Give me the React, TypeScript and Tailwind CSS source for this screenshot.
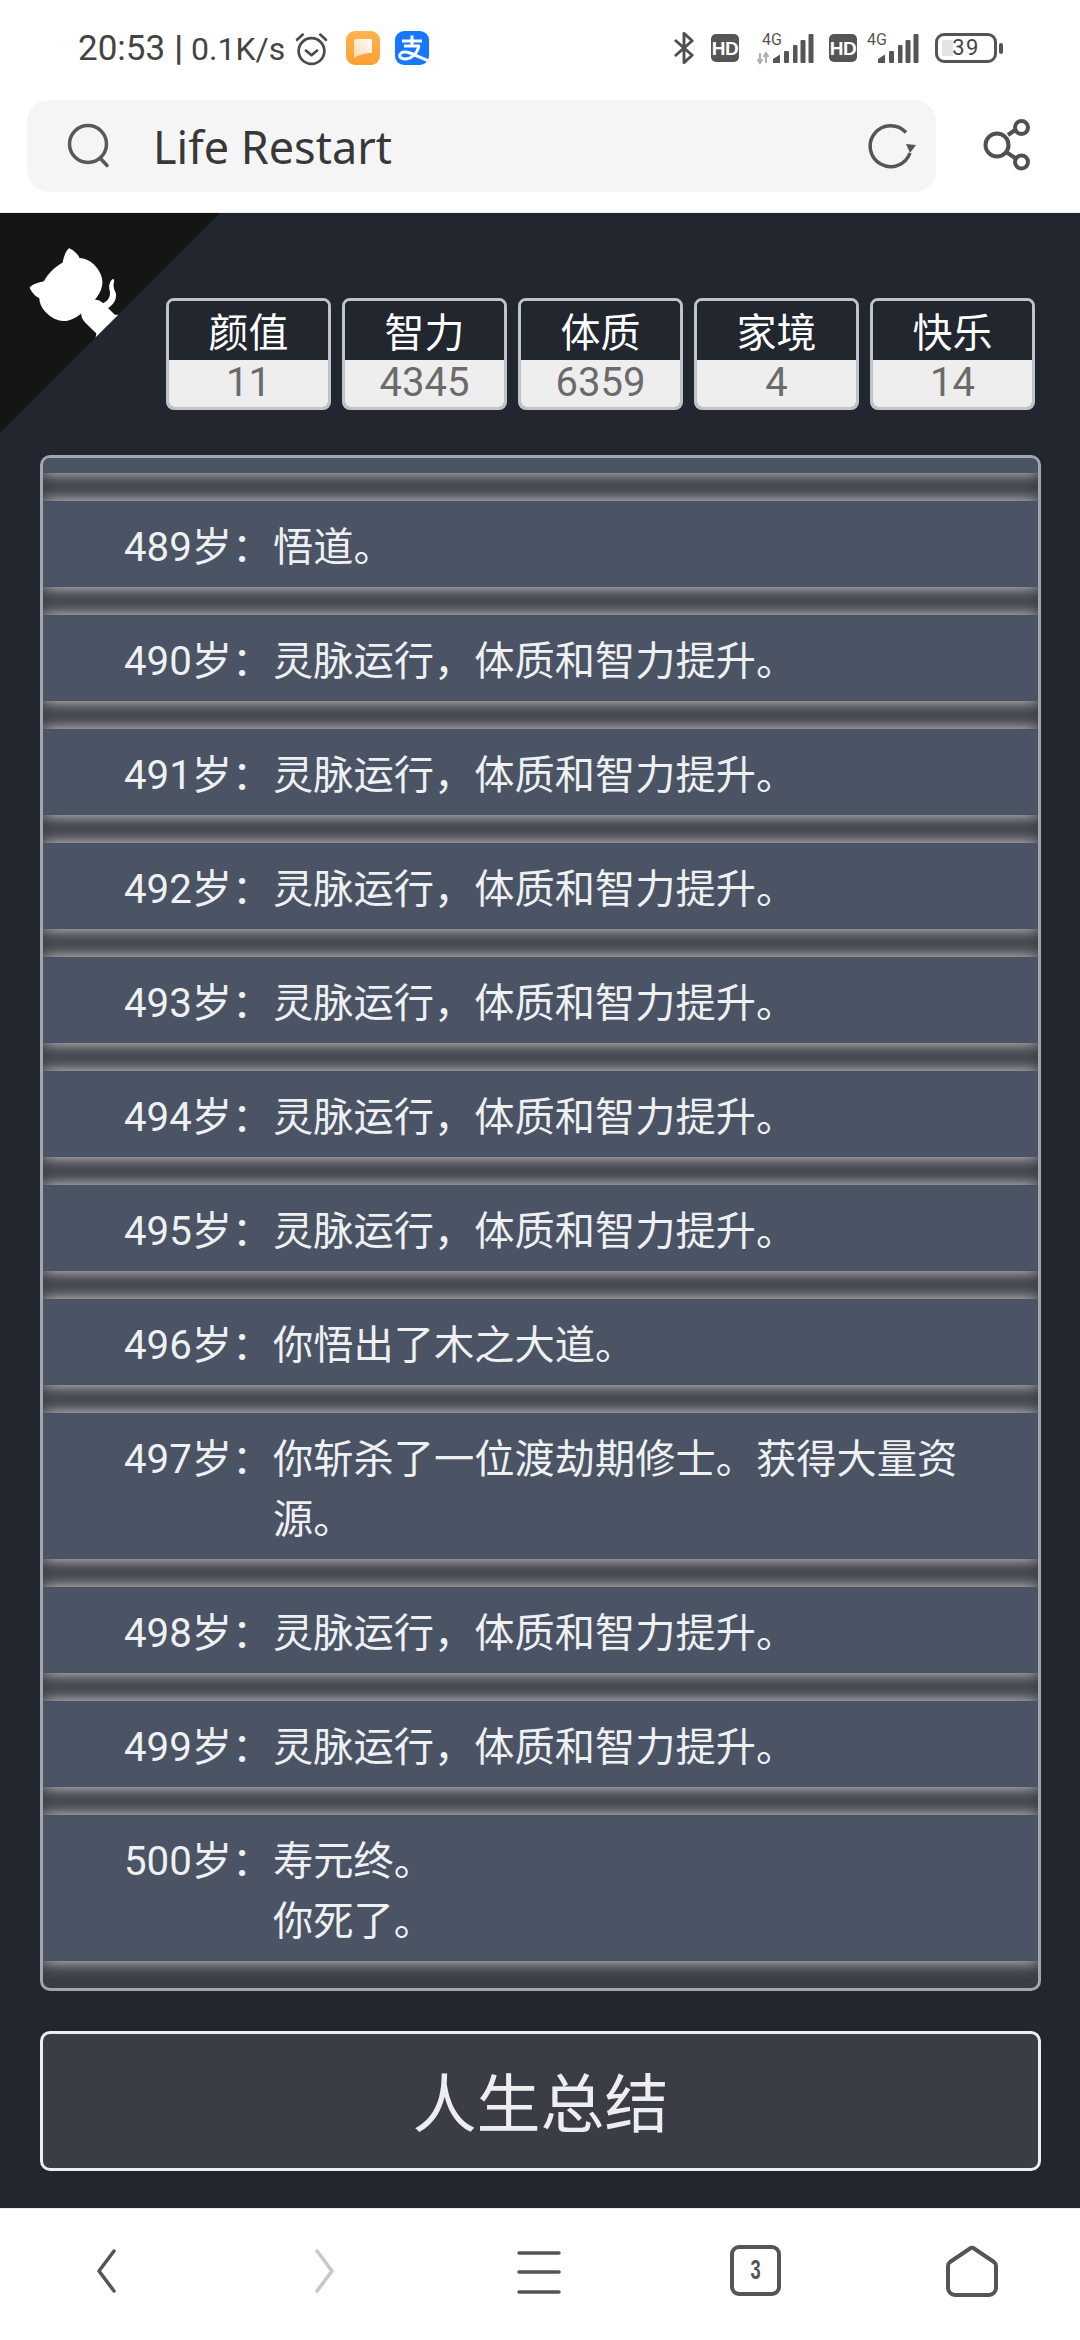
import React from "react";

const SANS = "font-['Roboto','Noto_Sans_CJK_SC',sans-serif]";

const stats = [
  ["颜值", "11"],
  ["智力", "4345"],
  ["体质", "6359"],
  ["家境", "4"],
  ["快乐", "14"],
];

const UP = "灵脉运行，体质和智力提升。";
const rows: [string, string[]][] = [
  ["489岁：", ["悟道。"]],
  ["490岁：", [UP]],
  ["491岁：", [UP]],
  ["492岁：", [UP]],
  ["493岁：", [UP]],
  ["494岁：", [UP]],
  ["495岁：", [UP]],
  ["496岁：", ["你悟出了木之大道。"]],
  ["497岁：", ["你斩杀了一位渡劫期修士。获得大量资源。"]],
  ["498岁：", [UP]],
  ["499岁：", [UP]],
  ["500岁：", ["寿元终。", "你死了。"]],
];

function Alarm() {
  return (
    <svg width="35" height="35" viewBox="0 0 34 34" fill="none" stroke="#4a4a4a" strokeWidth="2.6" strokeLinecap="round" strokeLinejoin="round">
      <circle cx="17" cy="19.5" r="12.5" />
      <path d="M11.5 19l5.5 4.5 5.5-4.5" />
      <path d="M3 8.5 8.5 3.5M31 8.5 25.5 3.5" />
    </svg>
  );
}

function NoteApp() {
  return (
    <svg width="34" height="34" viewBox="0 0 34 34">
      <defs>
        <linearGradient id="og" x1="0" y1="0" x2="0" y2="1">
          <stop offset="0" stopColor="#ffb44e" />
          <stop offset="1" stopColor="#fb9f32" />
        </linearGradient>
        <linearGradient id="wg" x1="1" y1="0" x2="0" y2="1">
          <stop offset="0" stopColor="#ffffff" />
          <stop offset="1" stopColor="#fbd9a8" />
        </linearGradient>
      </defs>
      <rect width="34" height="34" rx="9" fill="url(#og)" />
      <path d="M10 8h14a2 2 0 0 1 2 2v12c-6 0-11 1-18 5V10a2 2 0 0 1 2-2z" fill="url(#wg)" />
    </svg>
  );
}

function Alipay() {
  return (
    <svg width="34" height="34" viewBox="0 0 34 34">
      <rect width="34" height="34" rx="9" fill="#1677ff" />
      <g fill="none" stroke="#fff" strokeWidth="3" strokeLinecap="butt">
        <path d="M7 10h20M17 4.5v10M9 15h16" />
        <path d="M24 15c-2 8-8 13-14 13-4 0-6-2-5-4.500 1-2.500 5-3.500 10-1.500 5 2 10 4.500 19 8" />
      </g>
    </svg>
  );
}

function Bluetooth() {
  return (
    <svg width="20" height="34" viewBox="0 0 22 36" fill="none" stroke="#4f4f4f" strokeWidth="3.2" strokeLinejoin="round" strokeLinecap="round">
      <path d="M2 10l18 16-9 8V2l9 8L2 26" />
    </svg>
  );
}

function HD() {
  return (
    <div className="w-[28px] h-[28px] rounded-[5px] bg-[#555555] flex items-center justify-center text-white font-bold text-[19px] leading-none font-['Liberation_Sans',sans-serif] tracking-[-0.5px]">
      HD
    </div>
  );
}

function Signal({ arrows }: { arrows?: boolean }) {
  return (
    <svg width="57" height="40" viewBox="0 -4 57 40">
      <text x="5" y="13" fontSize="16" fill="#555" fontFamily="Roboto, sans-serif">4G</text>
      {arrows && (
        <g fill="none" stroke="#b0b0b0" strokeWidth="2">
          <path d="M3 21v10M0.500 27l2.500 4 2.500-4" />
          <path d="M9 31V21M6.500 25l2.500-4 2.500 4" />
        </g>
      )}
      <g fill="#555">
        <path d="M16 31v-4l7-4.500v8.500z" />
        <rect x="27" y="19" width="5" height="12" rx="1" />
        <rect x="36" y="13" width="4.500" height="18" rx="1" />
        <rect x="43.500" y="8" width="5" height="23" rx="1" />
        <rect x="51.500" y="2" width="5" height="29" rx="1" />
      </g>
    </svg>
  );
}

function Battery() {
  return (
    <div className="flex items-center gap-[2px]">
      <div className="relative w-[62px] h-[30px] rounded-[9px] border-[3px] border-[#555555] flex items-center justify-center">
        <div className="absolute left-[4px] top-[4px] bottom-[4px] w-[11px] bg-[#e4e4e4]" />
        <span className="relative text-[#444444] text-[22px] leading-none font-['Roboto',sans-serif] tracking-[1.5px]">39</span>
      </div>
      <div className="w-[4px] h-[11px] rounded-[2px] bg-[#555555]" />
    </div>
  );
}

function SearchIcon() {
  return (
    <svg width="44" height="46" viewBox="0 0 44 46" fill="none" stroke="#595959" strokeWidth="3.500" strokeLinecap="round">
      <circle cx="21" cy="21" r="18.500" />
      <path d="M33 35l7 7.500" />
    </svg>
  );
}

function RefreshIcon() {
  return (
    <svg width="48" height="46" viewBox="0 0 48 46" fill="none">
      <path d="M42 30A20.500 20.500 0 1 1 38 9.500" stroke="#555" strokeWidth="3.500" />
      <path d="M38 21l10 1-6 8z" fill="#555" />
    </svg>
  );
}

function ShareIcon() {
  return (
    <svg width="48" height="54" viewBox="0 0 48 54" fill="none" stroke="#505050" strokeWidth="4">
      <circle cx="14" cy="27" r="11.500" />
      <circle cx="38.500" cy="9.500" r="6.500" />
      <circle cx="38.500" cy="44" r="6.500" />
      <path d="M25 17l7-5M23 34l10 6.500" />
    </svg>
  );
}

function Octocat() {
  return (
    <svg className="absolute left-0 top-0 w-[220px] h-[220px] -scale-x-100" viewBox="0 0 250 250" fill="#151513">
      <path d="M0,0 L115,115 L130,115 L142,142 L250,250 L250,0 Z" />
      <path
        d="M128.3,109.0 C113.8,99.7 119.0,89.6 119.0,89.6 C122.0,82.7 120.5,78.6 120.5,78.6 C119.2,72.0 123.4,76.3 123.4,76.3 C127.3,80.9 125.5,87.3 125.5,87.3 C122.9,97.6 130.6,101.9 134.4,103.2"
        fill="#ffffff"
      />
      <path
        d="M115.0,115.0 C114.9,115.1 118.7,116.5 119.8,115.4 L133.7,101.6 C136.9,99.2 139.9,98.4 142.2,98.6 C133.8,88.0 127.5,74.4 143.8,58.0 C148.5,53.4 154.0,51.2 159.7,51.0 C160.3,49.4 163.2,43.6 171.4,40.1 C171.4,40.1 176.1,42.5 178.8,56.2 C183.1,58.6 187.2,61.8 190.9,65.4 C194.5,69.0 197.7,73.2 200.1,77.6 C213.8,80.2 216.3,84.9 216.3,84.9 C212.7,93.1 206.9,96.0 205.4,96.6 C205.1,102.4 203.0,107.8 198.3,112.5 C181.9,128.9 168.3,122.5 157.7,114.1 C157.9,116.9 156.7,120.9 152.7,124.9 L141.0,136.5 C139.8,137.7 141.6,141.9 141.8,141.8 Z"
        fill="#ffffff"
      />
    </svg>
  );
}

function NavChevron({ dir, color }: { dir: "l" | "r"; color: string }) {
  return (
    <svg width="20" height="44" viewBox="0 0 20 44" fill="none" stroke={color} strokeWidth="3.500" strokeLinecap="round" strokeLinejoin="round">
      <path d={dir === "l" ? "M17 2 2 22l15 20" : "M3 2l15 20L3 42"} />
    </svg>
  );
}

function Hamburger() {
  return (
    <svg width="44" height="44" viewBox="0 0 44 44" stroke="#555" strokeWidth="3.500" strokeLinecap="round">
      <path d="M2 3h40M2 22h40M2 42h40" />
    </svg>
  );
}

function HomeIcon() {
  return (
    <svg width="52" height="52" viewBox="0 0 52 52" fill="none" stroke="#555" strokeWidth="4" strokeLinejoin="round">
      <path d="M24 3.500 4 17a5 5 0 0 0-2 4v22a7 7 0 0 0 7 7h34a7 7 0 0 0 7-7V21a5 5 0 0 0-2-4L28 3.500a3.500 3.500 0 0 0-4 0z" />
    </svg>
  );
}

export default function App() {
  return (
    <div className={`w-[1080px] h-[2340px] bg-white flex flex-col overflow-hidden ${SANS}`}>
      {/* status bar */}
      <div className="h-[100px] shrink-0 flex items-center pl-[78px] pr-[77px] pb-[4px] text-[#444444]">
        <div className="w-[209px] flex items-baseline whitespace-nowrap leading-none font-['Roboto',sans-serif] text-[32px]">
          <span className="text-[35px]">20:53</span>
          <span className="ml-[9px] mr-[8px] text-[35px] font-bold">|</span>
          <span>0.1K/s</span>
        </div>
        <div className="ml-[7px] flex items-center">
          <Alarm />
        </div>
        <div className="ml-[17px]">
          <NoteApp />
        </div>
        <div className="ml-[15px]">
          <Alipay />
        </div>
        <div className="ml-auto flex items-center">
          <Bluetooth />
          <div className="ml-[17px]"><HD /></div>
          <div className="ml-[18px]"><Signal arrows /></div>
          <div className="ml-[15px]"><HD /></div>
          <div className="ml-[5px]"><Signal /></div>
          <div className="ml-[16px]"><Battery /></div>
        </div>
      </div>

      {/* address bar */}
      <div className="h-[113px] shrink-0 flex items-start pl-[27px] border-b border-[#eeeeee]">
        <div className="w-[909px] h-[92px] rounded-[22px] bg-[#f5f5f5] flex items-center pl-[40px] pr-[20px]">
          <SearchIcon />
          <span className="ml-[42px] text-[45px] leading-none text-[#383838] font-['Noto_Sans',sans-serif]">Life Restart</span>
          <div className="ml-auto"><RefreshIcon /></div>
        </div>
        <div className="ml-[47px] mt-[18px]"><ShareIcon /></div>
      </div>

      {/* page */}
      <div className="relative h-[1995px] shrink-0 bg-[#21262f] flex flex-col items-stretch pt-[85px] pl-[40px] pr-[39px]">
        <Octocat />
        <div className="relative flex justify-end gap-[11px] pr-[6px]">
          {stats.map(([k, v]) => (
            <div key={k} className="w-[165px] h-[112px] rounded-[8px] border-[3px] border-[#c1c3c7] overflow-hidden flex flex-col text-center">
              <div className="h-[59px] bg-[#21262f] text-white text-[40px] leading-[66px]">{k}</div>
              <div className="flex-1 bg-[#eeeeee] text-[#6b6b6b] text-[40px] leading-[46px]">{v}</div>
            </div>
          ))}
        </div>

        <div className="mt-[45px] h-[1536px] rounded-[10px] border-[3px] border-[#a3a6ab] bg-[#3a3d45] overflow-hidden flex flex-col gap-[28px]">
          <div className="h-[15px] shrink-0 bg-[#4a5464] shadow-[0_0_16px_rgba(255,255,255,0.85)]" />
          {rows.map(([age, lines]) => (
            <div key={age} className="shrink-0 bg-[#4a5464] shadow-[0_0_16px_rgba(255,255,255,0.85)] flex pl-[81px] pr-[22px] pt-[17px] pb-[9px] text-[40.25px] leading-[60px] text-[#eef0f2]">
              <div className="w-[149px] shrink-0 whitespace-nowrap">{age}</div>
              <div className="flex-1 flex flex-col">
                {lines.map((l) => (
                  <div key={l}>{l}</div>
                ))}
              </div>
            </div>
          ))}
        </div>

        <div className="mt-[40px] h-[140px] rounded-[10px] border-[3px] border-[#eceef0] bg-[#3a3d45] text-[#eceef0] text-[64px] leading-none flex items-center justify-center pt-[10px]">
          人生总结
        </div>
      </div>

      {/* bottom nav */}
      <div className="flex-1 border-t border-[#e8e8e8] relative flex items-start pt-[40px]">
        <div className="ml-[97px]"><NavChevron dir="l" color="#555" /></div>
        <div className="ml-[197px]"><NavChevron dir="r" color="#c8c8c8" /></div>
        <div className="ml-[183px] mt-[1px]"><Hamburger /></div>
        <div className="ml-[169px] -mt-[4px] w-[51px] h-[51px] rounded-[9px] border-[4px] border-[#555555] flex items-center justify-center text-[#555555] text-[27px] leading-none font-bold font-['Liberation_Sans',sans-serif]">
          <span className="inline-block scale-x-[0.68]">3</span>
        </div>
        <div className="ml-[165px] -mt-[4px]"><HomeIcon /></div>
      </div>
    </div>
  );
}
